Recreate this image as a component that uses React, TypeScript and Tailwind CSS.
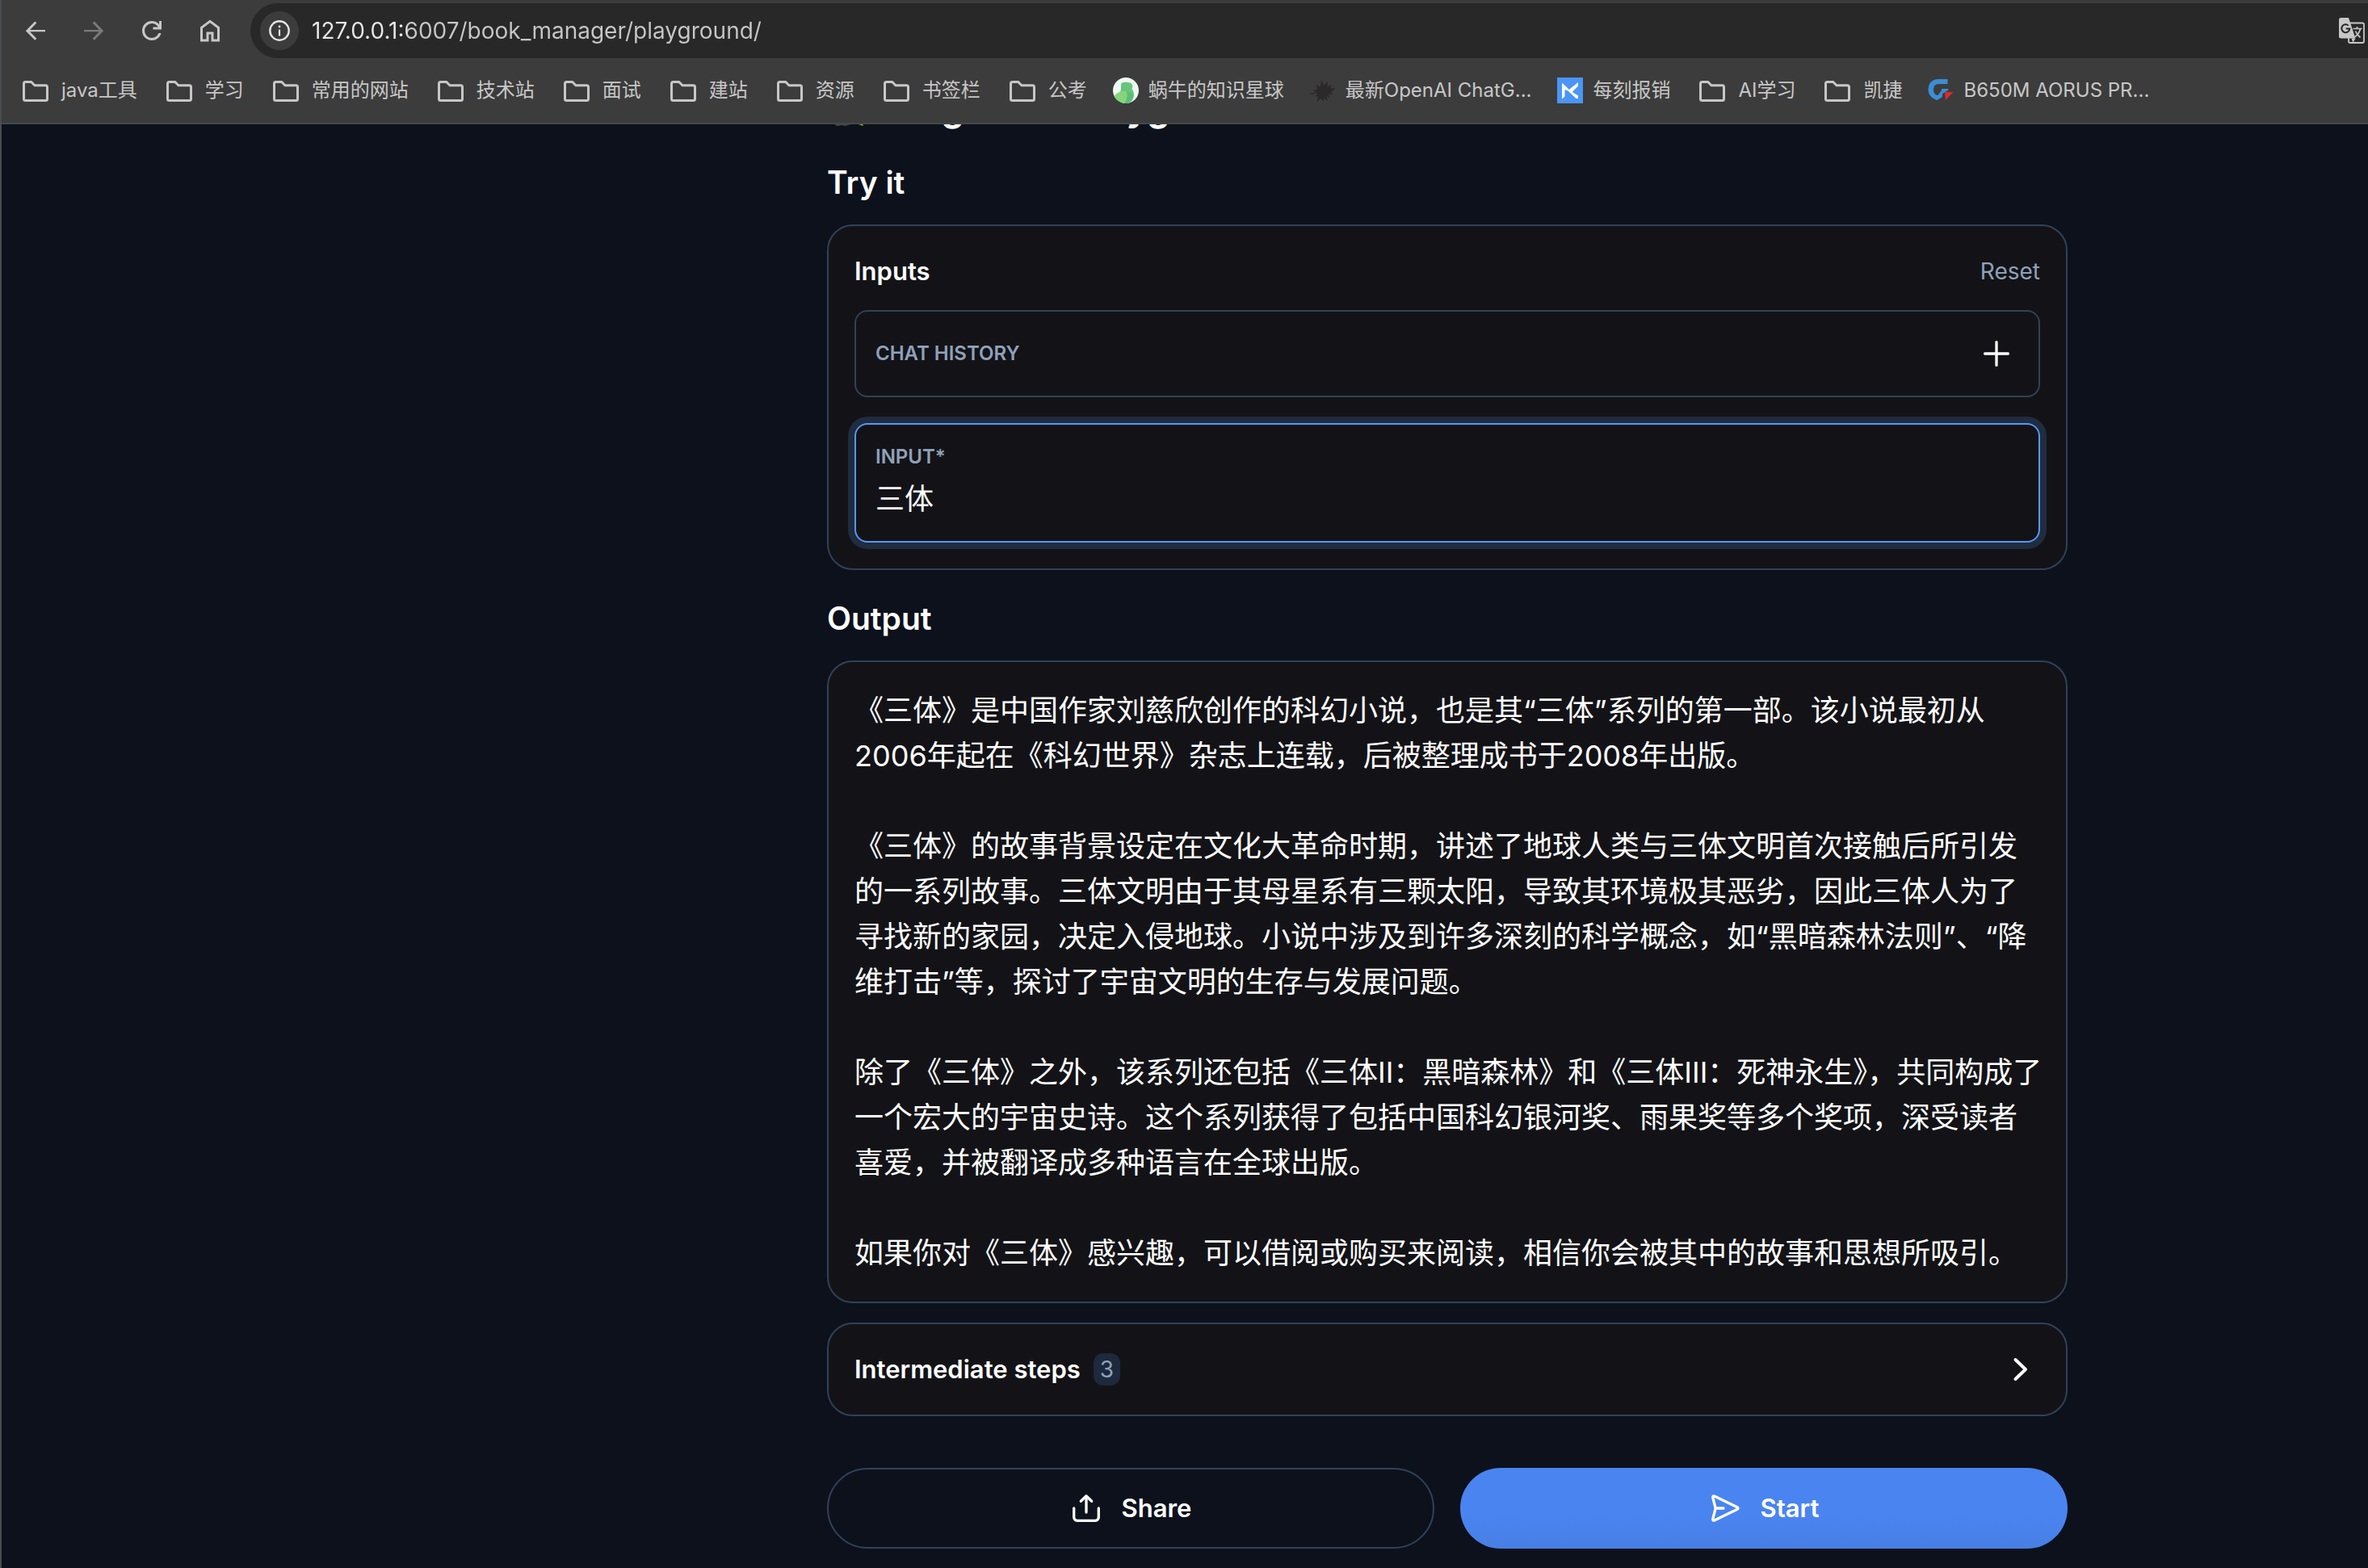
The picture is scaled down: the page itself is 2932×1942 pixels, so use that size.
import { useState } from "react";
import type { ReactNode } from "react";

const OUTPUT = `《三体》是中国作家刘慈欣创作的科幻小说，也是其“三体”系列的第一部。该小说最初从2006年起在《科幻世界》杂志上连载，后被整理成书于2008年出版。

《三体》的故事背景设定在文化大革命时期，讲述了地球人类与三体文明首次接触后所引发的一系列故事。三体文明由于其母星系有三颗太阳，导致其环境极其恶劣，因此三体人为了寻找新的家园，决定入侵地球。小说中涉及到许多深刻的科学概念，如“黑暗森林法则”、“降维打击”等，探讨了宇宙文明的生存与发展问题。

除了《三体》之外，该系列还包括《三体II：黑暗森林》和《三体III：死神永生》，共同构成了一个宏大的宇宙史诗。这个系列获得了包括中国科幻银河奖、雨果奖等多个奖项，深受读者喜爱，并被翻译成多种语言在全球出版。

如果你对《三体》感兴趣，可以借阅或购买来阅读，相信你会被其中的故事和思想所吸引。`;

function BackIcon() {
  return (
    <svg viewBox="0 0 24 24" className="size-9" fill="currentColor" aria-hidden="true">
      <path d="M7.4 12.9 12.9 18.5 11.5 19.9 3.9 12.1 11.5 4.3 12.9 5.7 7.4 11.3H20v1.6z" />
    </svg>
  );
}

function ForwardIcon() {
  return (
    <svg viewBox="0 0 24 24" className="size-9" fill="currentColor" aria-hidden="true">
      <path d="M16.6 12.9 11.1 18.5l1.4 1.4 7.6-7.8-7.6-7.8-1.4 1.4 5.5 5.6H4v1.6z" />
    </svg>
  );
}

function ReloadIcon() {
  return (
    <svg viewBox="0 0 24 24" className="size-9" fill="currentColor" aria-hidden="true">
      <path d="M12 20q-3.35 0-5.675-2.325T4 12t2.325-5.675T12 4q1.725 0 3.3.712T18 6.75V4h2v7h-7V9h4.2q-.8-1.4-2.187-2.2T12 6Q9.500 6 7.750 7.750T6 12t1.750 4.250T12 18q1.925 0 3.475-1.100T17.650 14h2.100q-.7 2.650-2.850 4.325T12 20z" />
    </svg>
  );
}

function HomeIcon() {
  return (
    <svg viewBox="0 0 24 24" className="size-9" fill="currentColor" aria-hidden="true">
      <path d="M6 19h3v-6h6v6h3v-9l-6-4.500L6 10zm-2 2V9l8-6 8 6v12h-7v-6h-2v6z" />
    </svg>
  );
}

function InfoIcon() {
  return (
    <svg viewBox="0 0 26 26" className="size-[26px]" fill="none" aria-hidden="true">
      <circle cx="13" cy="13" r="11.700" stroke="currentColor" strokeWidth="2.400" />
      <circle cx="13" cy="8" r="1.400" fill="currentColor" />
      <path d="M13 11.500v8" stroke="currentColor" strokeWidth="2.200" />
    </svg>
  );
}

function TranslateIcon() {
  return (
    <svg viewBox="0 0 32 32" className="size-8" fill="none" aria-hidden="true">
      <rect x="12" y="6.500" width="19" height="24.500" rx="2" stroke="#c7c7c7" strokeWidth="1.800" />
      <path d="M2.500 0H12l8.500 25.500H2.500A2.500 2.500 0 0 1 0 23V2.500A2.500 2.500 0 0 1 2.500 0z" fill="#c7c7c7" />
      <path d="M15.500 25.500h5L17.500 31z" fill="#c7c7c7" />
      <path d="M11.800 9.600A5 5 0 1 0 13.300 13.600H8.700" stroke="#282828" strokeWidth="2" />
      <path d="M17.500 13.500h11M22.500 11v2.500M26.500 13.500c-1 4.500-3.500 8-6.500 10M20.500 16.500c1.200 3 3.500 6 6 8" stroke="#c7c7c7" strokeWidth="1.700" />
    </svg>
  );
}

function FolderIcon() {
  return (
    <svg viewBox="0 0 40 40" className="size-10 shrink-0" fill="none" aria-hidden="true">
      <path
        d="M7.500 9.500h7.200l4.300 4.300h13.500a2 2 0 0 1 2 2v14.700a2 2 0 0 1-2 2h-25a2 2 0 0 1-2-2v-19a2 2 0 0 1 2-2z"
        stroke="#c7c7c7"
        strokeWidth="3"
      />
    </svg>
  );
}

function BirdIcon() {
  return (
    <svg viewBox="0 0 32 32" className="size-8 shrink-0" aria-hidden="true">
      <defs>
        <clipPath id="bird-disc">
          <circle cx="16" cy="16" r="16" />
        </clipPath>
      </defs>
      <g clipPath="url(#bird-disc)">
        <rect width="32" height="32" fill="#eef9f3" />
        <path d="M11 6.500c4-1.200 9-1 12 1l1.500 3.200-1 3.300c3 4 3.500 9 .5 13-2 3-5 5-8 5H3L0 24c5-3 10-5 10-10 0-3-.5-5 1-7.500z" fill="#67c67c" />
        <path d="M0 25c5-7 11-9 16-8 4 3 3 11-2 15H0z" fill="#86d47c" />
        <path d="M17 17c1.500 5 .5 11-3 15h4c5-1 8-6 7.500-11z" fill="#5cbd76" />
      </g>
    </svg>
  );
}

function MapleIcon() {
  return (
    <svg viewBox="0 0 32 32" className="size-8 shrink-0" fill="#2b2929" aria-hidden="true">
      <path d="M14 3l3.200 6.500L22 5l-.5 6 5-1.500-1.500 3.800 6.500.2-5.500 4.500 2 3-5.500-.5 2 4-4-1.500 1.500 6.500-4.500-4-1 4-3-3.500-5 4.500 1.500-7-3.500 0 3-3.500-5.500-4.500 5-.5-1-6.500 4.500 3.500z" />
      <path d="M0 20l8-2v1.500L.5 21z" />
    </svg>
  );
}

function MeikeIcon() {
  return (
    <svg viewBox="0 0 32 32" className="size-8 shrink-0" aria-hidden="true">
      <rect width="32" height="32" fill="#4b95f6" />
      <path d="M6 6.500l8.500 8V17L9.500 15v8.500L6 26.500z" fill="#fff" />
      <path d="M26 6v4.500l-7 7 .5 1 6.500 4V26h-2.500l-9.500-9v-1.500z" fill="#fff" />
    </svg>
  );
}

function GigabyteIcon() {
  return (
    <svg viewBox="0 0 32 32" className="size-8 shrink-0" aria-hidden="true">
      <path d="M24.500 2v6H13c-4 0-6 3-6 7s2 7 5.500 7L17 16v-2h8.500v1.500L18 20v4l-6.500 4C5 26 .5 21.500.5 15 .5 7 6 2 12.500 2z" fill="#3a8ed6" />
      <path d="M21 18h10.500L22 28z" fill="#dd2a2e" />
    </svg>
  );
}

function ParrotIcon() {
  return (
    <svg viewBox="0 0 60 60" className="h-[60px] w-[60px]" aria-hidden="true">
      <path d="M14 10c8-8 22-6 26 4 4 9 3 16-1 26L24 46c-8-8-14-22-10-36z" fill="#4c9a3b" />
      <path d="M36 32l9 20-6-2-8-12z" fill="#8fbf2c" />
      <path d="M10 46h22l-2 4-4 1-4 1-4-1-4 1-4-1z" fill="#45474a" />
    </svg>
  );
}

function PlusIcon() {
  return (
    <svg viewBox="0 0 40 40" className="size-10" fill="none" stroke="currentColor" strokeWidth="3.300" strokeLinecap="round" aria-hidden="true">
      <path d="M20 5.600v28.800M5.600 20h28.800" />
    </svg>
  );
}

function ChevronIcon() {
  return (
    <svg viewBox="0 0 40 40" className="size-10" fill="none" stroke="currentColor" strokeWidth="4" strokeLinecap="round" strokeLinejoin="round" aria-hidden="true">
      <path d="M13.500 8l12.500 12-12.500 12" />
    </svg>
  );
}

function ShareIcon() {
  return (
    <svg viewBox="0 0 40 40" className="size-10" fill="none" stroke="currentColor" strokeWidth="3.300" strokeLinecap="round" strokeLinejoin="round" aria-hidden="true">
      <path d="M4.700 20v11.300a4 4 0 0 0 4 4h22.600a4 4 0 0 0 4-4V20" />
      <path d="M20 25V5M13.300 11.300L20 4.700l6.700 6.600" />
    </svg>
  );
}

function SendIcon() {
  return (
    <svg viewBox="0 0 40 40" className="size-10" fill="none" stroke="currentColor" strokeWidth="3.300" strokeLinecap="round" strokeLinejoin="round" aria-hidden="true">
      <path d="M18 20H8.200M7.900 21.100L4.800 33.200c-.4 1.500.7 2.400 2 1.700l28.300-13.600c1.200-.6 1.200-2 0-2.600L6.800 5.100c-1.300-.7-2.400.2-2 1.700l3.100 12.100c.2.700.2 1.500 0 2.200z" />
    </svg>
  );
}

function NavButton({ label, dim, children }: { label: string; dim?: boolean; children: ReactNode }) {
  return (
    <button type="button" aria-label={label} className={dim ? "text-[#7b7b7b]" : "text-[#c7c7c7]"}>
      {children}
    </button>
  );
}

const BOOKMARKS: { label: string; icon: ReactNode }[] = [
  { label: "java工具", icon: <FolderIcon /> },
  { label: "学习", icon: <FolderIcon /> },
  { label: "常用的网站", icon: <FolderIcon /> },
  { label: "技术站", icon: <FolderIcon /> },
  { label: "面试", icon: <FolderIcon /> },
  { label: "建站", icon: <FolderIcon /> },
  { label: "资源", icon: <FolderIcon /> },
  { label: "书签栏", icon: <FolderIcon /> },
  { label: "公考", icon: <FolderIcon /> },
  { label: "蜗牛的知识星球", icon: <BirdIcon /> },
  { label: "最新OpenAI ChatG...", icon: <MapleIcon /> },
  { label: "每刻报销", icon: <MeikeIcon /> },
  { label: "AI学习", icon: <FolderIcon /> },
  { label: "凯捷", icon: <FolderIcon /> },
  { label: "B650M AORUS PR...", icon: <GigabyteIcon /> },
];

function BrowserChrome() {
  return (
    <header className="relative border-b-2 border-[#444746] bg-[#3c3c3c]">
      <div className="flex items-center pt-1 pl-6">
        <nav aria-label="Browser" className="flex shrink-0 items-center gap-9">
          <NavButton label="Back"><BackIcon /></NavButton>
          <NavButton label="Forward" dim><ForwardIcon /></NavButton>
          <NavButton label="Reload"><ReloadIcon /></NavButton>
          <NavButton label="Home"><HomeIcon /></NavButton>
        </nav>
        <div className="ml-8 flex h-[68px] flex-1 items-center gap-4 rounded-l-full bg-[#282828] pr-1 pl-3">
          <button type="button" aria-label="Site information" className="grid size-12 shrink-0 place-items-center rounded-full bg-[#3c3c3c] text-[#e3e3e3]">
            <InfoIcon />
          </button>
          <input
            type="text"
            aria-label="Address"
            defaultValue="127.0.0.1:6007/book_manager/playground/"
            className="h-12 min-w-0 flex-1 bg-[linear-gradient(90deg,#e8e8e8_118px,#c7c7c7_118px)] bg-clip-text text-[28px] text-transparent outline-none"
          />
          <button type="button" aria-label="Translate this page" className="shrink-0">
            <TranslateIcon />
          </button>
        </div>
      </div>
      <nav aria-label="Bookmarks" className="flex h-20 items-center gap-8 overflow-hidden pl-[22px]">
        {BOOKMARKS.map((b) => (
          <a key={b.label} href="#" className="flex shrink-0 items-center gap-3 text-2xl whitespace-nowrap text-[#c7c7c7]">
            {b.icon}
            {b.label}
          </a>
        ))}
      </nav>
    </header>
  );
}

export default function App() {
  const [input, setInput] = useState("三体");
  return (
    <div
      lang="zh-CN"
      className="flex min-h-screen flex-col border-l-2 border-[#4b4c4e] bg-[#0c111c] font-['Inter','Noto_Sans_CJK_SC',sans-serif] text-white"
    >
      <BrowserChrome />
      <div className="grid flex-1 grid-cols-[511fr_minmax(0,1536px)_186fr] overflow-hidden">
        <main className="col-start-2 flex flex-col">
          <h1 className="-mt-[52px] flex h-16 items-center gap-1 text-[44px] font-bold">
            <ParrotIcon />
            LangServe Playground
          </h1>

          <h2 className="mt-8 text-[39px] leading-14 font-semibold">Try it</h2>
          <section className="mt-6 rounded-[32px] border-2 border-slate-700 bg-[#131317] p-8">
            <div className="flex h-12 items-center justify-between">
              <h3 className="text-[31px] font-semibold">Inputs</h3>
              <button type="button" className="text-[28px] text-slate-400">Reset</button>
            </div>
            <div className="mt-6 flex h-[108px] items-center justify-between rounded-2xl border-2 border-slate-700 px-6">
              <span className="text-2xl font-semibold text-slate-400 uppercase">Chat history</span>
              <button type="button" aria-label="Add message" className="p-2">
                <PlusIcon />
              </button>
            </div>
            <div className="mt-8 flex flex-col gap-2 rounded-2xl border-2 border-[#5499f7] p-6 ring-8 ring-[#202c3f]">
              <label htmlFor="topic" className="text-2xl font-semibold text-slate-400 uppercase">Input*</label>
              <textarea
                id="topic"
                rows={1}
                value={input}
                onChange={(e) => setInput(e.target.value)}
                className="block h-14 w-full resize-none overflow-hidden bg-transparent text-[36px] leading-14 outline-none"
              />
            </div>
          </section>

          <h2 className="mt-8 text-[39px] leading-14 font-semibold">Output</h2>
          <section className="mt-6 rounded-[32px] border-2 border-slate-700 bg-[#131317] py-8 pr-7 pl-8">
            <p className="text-[36px] leading-14 whitespace-pre-wrap">{OUTPUT}</p>
          </section>

          <button
            type="button"
            aria-expanded="false"
            className="mt-6 flex h-[116px] items-center justify-between rounded-[32px] border-2 border-slate-700 bg-[#131317] px-8"
          >
            <span className="flex items-center gap-4">
              <span className="text-[31px] font-semibold">Intermediate steps</span>
              <span className="rounded-xl bg-slate-800 px-2 text-[28px] leading-10 text-slate-400">3</span>
            </span>
            <span className="pr-1">
              <ChevronIcon />
            </span>
          </button>

          <div className="mt-16 grid grid-cols-2 gap-8 pb-6">
            <button type="button" className="flex h-[100px] items-center justify-center gap-6 rounded-full border-2 border-slate-700 text-[31px] font-semibold">
              <ShareIcon />
              Share
            </button>
            <button type="button" className="flex h-[100px] items-center justify-center gap-6 rounded-full bg-linear-to-b from-[#4a84f0] from-60% to-[#487fe5] text-[31px] font-semibold">
              <SendIcon />
              Start
            </button>
          </div>
        </main>
      </div>
    </div>
  );
}
